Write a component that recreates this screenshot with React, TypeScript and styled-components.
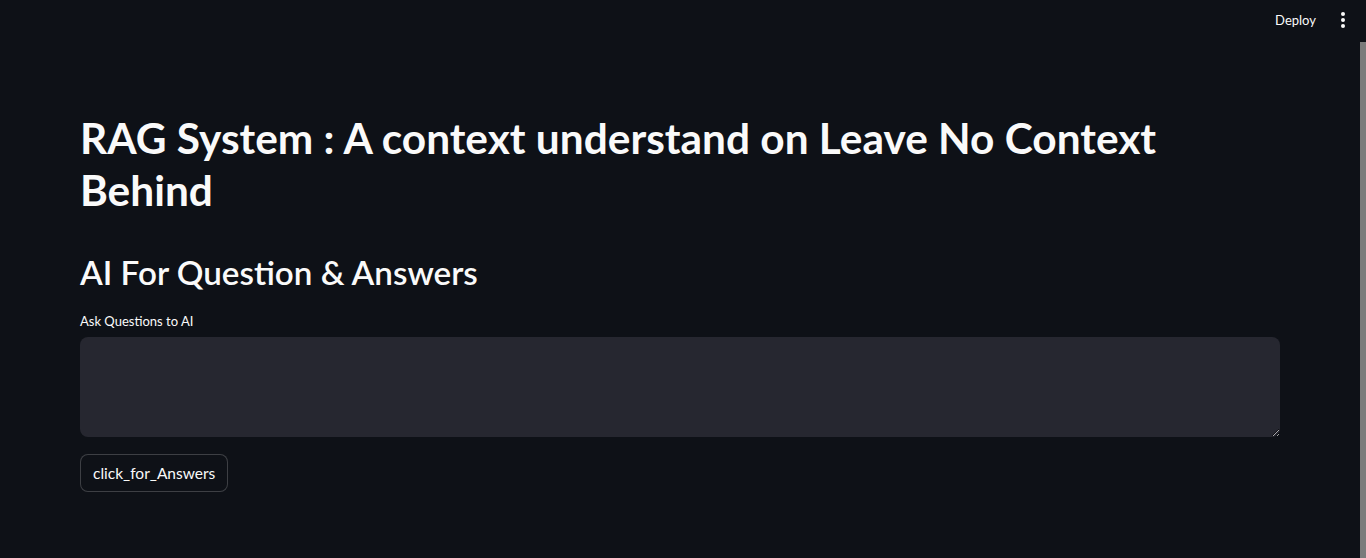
import React from "react";
import styled, { createGlobalStyle } from "styled-components";

const Global = createGlobalStyle`
  html, body { margin: 0; padding: 0; background: #0e1117; }
  body { font-family: "Lato", "Noto Sans", sans-serif; color: #fafafa; overflow: hidden; }
  * { box-sizing: border-box; }
`;

const Page = styled.div`
  display: flex;
  width: 1366px;
  height: 558px;
  background: #0e1117;
`;

const Main = styled.div`
  flex: 1;
  display: flex;
  flex-direction: column;
`;

const Header = styled.header`
  height: 40px;
  display: flex;
  align-items: center;
  justify-content: flex-end;
  gap: 25px;
  padding-right: 15px;
`;

const DeployButton = styled.button`
  background: transparent;
  border: none;
  color: #fafafa;
  font-family: inherit;
  font-size: 13px;
  padding: 0;
  cursor: pointer;
`;

const MenuDots = styled.div`
  display: flex;
  flex-direction: column;
  gap: 2px;
  width: 4px;
  span {
    width: 4px;
    height: 4px;
    border-radius: 50%;
    background: #fafafa;
  }
`;

const Content = styled.main`
  padding: 56px 80px 0 80px;
  display: flex;
  flex-direction: column;
`;

const Title = styled.h1`
  margin: 0;
  font-size: 42.4px;
  font-weight: 700;
  line-height: 52px;
  padding: 16px 0 0 0;
`;

const Subtitle = styled.h2`
  margin: 0;
  font-size: 33.2px;
  font-weight: 600;
  line-height: 44px;
  padding: 34px 0 0 0;
`;

const Label = styled.label`
  font-size: 13px;
  line-height: 18px;
  margin-top: 18px;
  margin-bottom: 7px;
`;

const TextArea = styled.textarea`
  width: 100%;
  height: 100px;
  background: #262730;
  border: none;
  border-radius: 8px;
  color: #fafafa;
  font-family: inherit;
  font-size: 16px;
  padding: 12px;
  outline: none;
  resize: vertical;
`;

const ActionButton = styled.button`
  align-self: flex-start;
  margin-top: 17px;
  height: 38px;
  padding: 0 12px;
  border-radius: 8px;
  border: 1px solid rgba(250, 250, 250, 0.2);
  background: #0e1117;
  color: #fafafa;
  font-family: inherit;
  font-size: 15.5px;
  cursor: pointer;
`;

const ScrollThumb = styled.div`
  width: 6px;
  margin-top: 42px;
  background: #7b7b7b;
`;

export default function App() {
  return (
    <>
      <Global />
      <Page>
        <Main>
          <Header>
            <DeployButton>Deploy</DeployButton>
            <MenuDots>
              <span />
              <span />
              <span />
            </MenuDots>
          </Header>
          <Content>
            <Title>RAG System : A context understand on Leave No Context Behind</Title>
            <Subtitle>AI For Question &amp; Answers</Subtitle>
            <Label htmlFor="q">Ask Questions to AI</Label>
            <TextArea id="q" />
            <ActionButton>click_for_Answers</ActionButton>
          </Content>
        </Main>
        <ScrollThumb />
      </Page>
    </>
  );
}
